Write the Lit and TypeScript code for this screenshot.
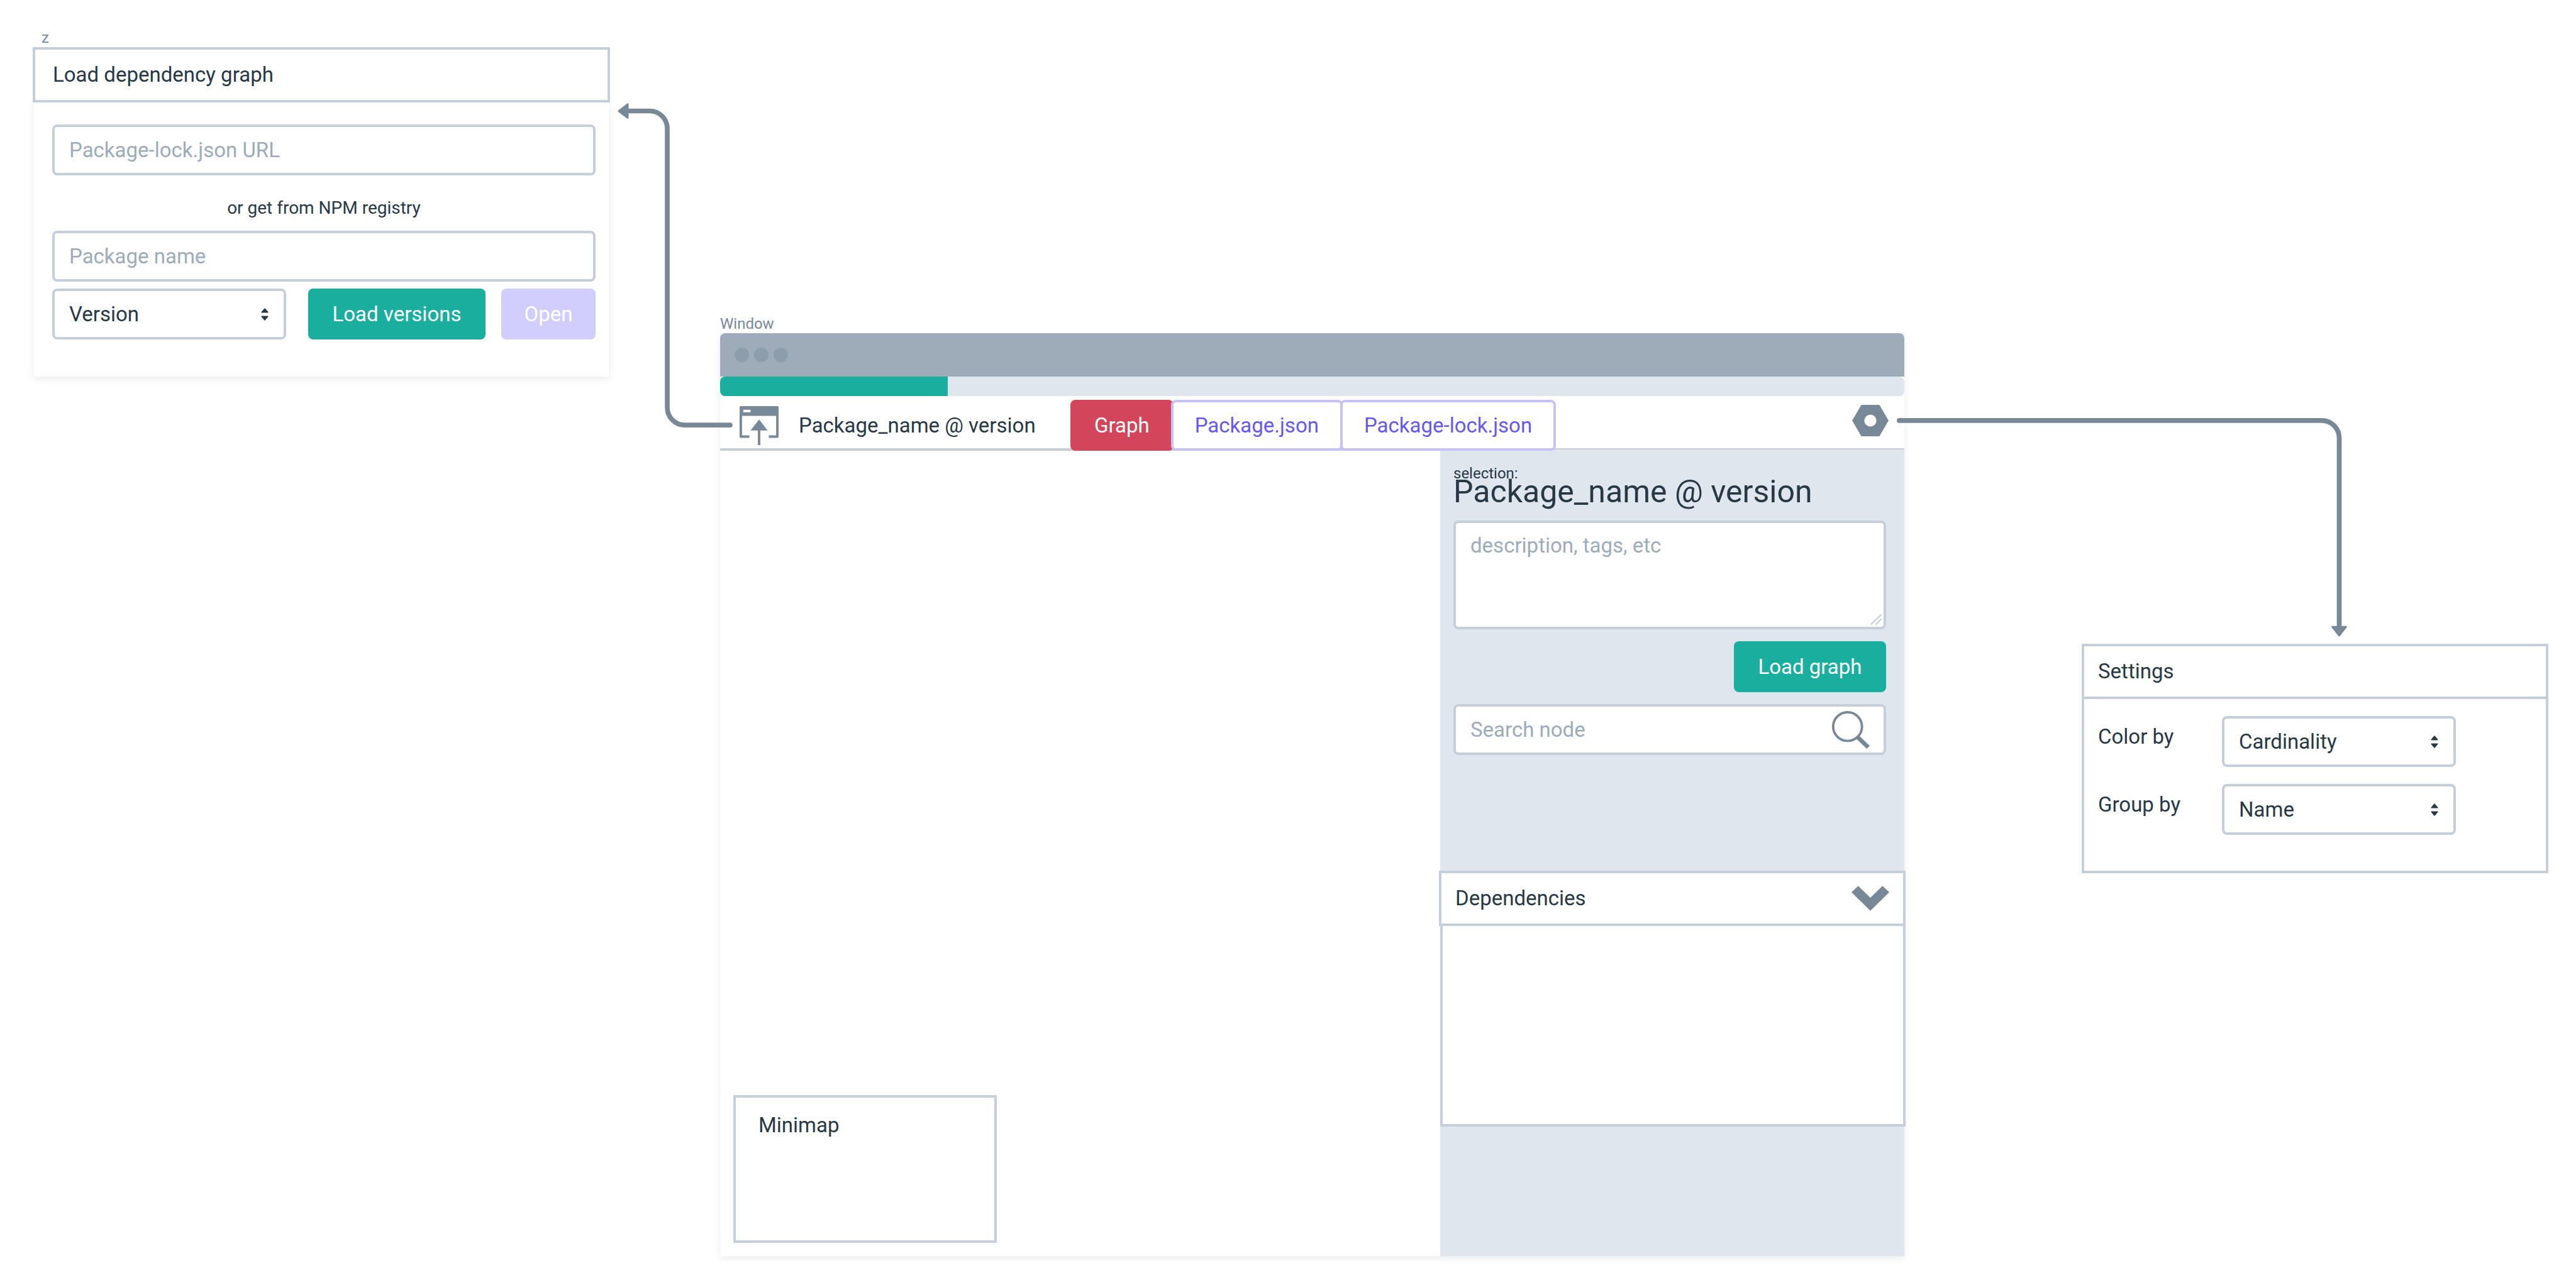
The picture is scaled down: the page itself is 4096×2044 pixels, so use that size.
import { LitElement, html, css } from "lit";
import { customElement, property, state } from "lit/decorators.js";
import { classMap } from "lit/directives/class-map.js";

/* Tokens and controls shared by every panel on the board. */
const shared = css`
  :host {
    --ink: #293845;
    --slate: #788896;
    --steel: #9eacb9;
    --line: #c4cfd9;
    --mist: #dfe6ed;
    --teal: #1aae9f;
    --red: #d3455b;
    --violet: #6558f5;
    --violet-line: #c7c1fb;
    --violet-off: #d1cdfc;
    display: block;
    box-sizing: border-box;
    color: var(--ink);
    font-family: Roboto, "Liberation Sans", sans-serif;
    font-size: 33px;
    line-height: 40px;
  }
  *,
  *::before,
  *::after {
    box-sizing: border-box;
  }
  h2,
  p {
    margin: 0;
    font-weight: 400;
    font-size: 33px;
  }
  .tag {
    color: var(--slate);
    font-size: 24px;
    line-height: 30px;
  }
  .bar {
    display: flex;
    align-items: center;
    justify-content: space-between;
    height: 88px;
    border: 4px solid var(--line);
    background: #fff;
    padding: 0 22px;
  }
  .field {
    display: block;
    width: 100%;
    height: 81px;
    margin: 0;
    padding: 0 23px;
    border: 4px solid var(--line);
    border-radius: 8px;
    outline: none;
    background: #fff;
    color: var(--ink);
    font: inherit;
  }
  .field::placeholder {
    color: var(--steel);
    opacity: 1;
  }
  .btn {
    height: 81px;
    margin: 0;
    padding: 0 32px;
    border: 0;
    border-radius: 8px;
    background: var(--teal);
    color: #fff;
    font: inherit;
    white-space: nowrap;
  }
  .btn:disabled {
    background: var(--violet-off);
  }
  .icon {
    display: block;
    fill: var(--slate);
  }
  .icon-btn {
    display: block;
    margin: 0;
    padding: 0;
    border: 0;
    background: none;
  }
  .cell {
    display: grid;
  }
  .cell > * {
    grid-area: 1 / 1;
  }
  .select {
    appearance: none;
  }
  .arrows {
    place-self: center end;
    margin-right: 28px;
    fill: var(--ink);
    pointer-events: none;
  }
`;

const pickList = (id: string, name: string, options: string[]) => html`<div class="cell">
  <select class="field select" id=${id} aria-label=${name}>
    ${options.map((o) => html`<option>${o}</option>`)}
  </select>
  <svg class="arrows" width="12" height="20" viewBox="0 0 12 20" aria-hidden="true">
    <path d="M5.2 .8a1 1 0 0 1 1.6 0L11.4 6.2Q12 7.5 10.7 7.5H1.3Q0 7.5 .6 6.2Z" />
    <path d="M5.2 19.2a1 1 0 0 0 1.6 0L11.4 13.8Q12 12.5 10.7 12.5H1.3Q0 12.5 .6 13.8Z" />
  </svg>
</div>`;

@customElement("load-panel")
class LoadPanel extends LitElement {
  static styles = [
    shared,
    css`
      .tag {
        padding-left: 14px;
      }
      .bar {
        position: relative;
        padding: 0 28px;
      }
      .body {
        margin: 0 2px;
        padding: 35px 21px 59px 29px;
        background: #fff;
        box-shadow: 0 4px 12px rgba(0, 0, 0, 0.08);
      }
      .or {
        padding: 36px 0 20px;
        font-size: 28px;
        line-height: 32px;
        text-align: center;
      }
      .row {
        display: grid;
        grid-template-columns: 1fr auto auto;
        margin-top: 11px;
      }
      .load {
        min-width: 282px;
        margin: 0 25px 0 35px;
      }
      .open {
        min-width: 150px;
      }
    `,
  ];

  render() {
    return html`
      <div class="tag">z</div>
      <header class="bar"><h2>Load dependency graph</h2></header>
      <div class="body">
        <input class="field" type="text" placeholder="Package-lock.json URL" aria-label="Package-lock.json URL" />
        <p class="or">or get from NPM registry</p>
        <input class="field" type="text" placeholder="Package name" aria-label="Package name" />
        <div class="row">
          ${pickList("version", "Version", ["Version"])}
          <button class="btn load" type="button">Load versions</button>
          <button class="btn open" type="button" disabled>Open</button>
        </div>
      </div>
    `;
  }
}

@customElement("graph-window")
class GraphWindow extends LitElement {
  static styles = [
    shared,
    css`
      :host {
        display: flex;
        flex-direction: column;
      }
      .frame {
        flex: 1;
        display: flex;
        flex-direction: column;
        border-radius: 8px 8px 0 0;
        background: #fff;
        box-shadow: 0 4px 12px rgba(0, 0, 0, 0.08);
      }
      .chrome {
        display: flex;
        align-items: center;
        gap: 8px;
        height: 69px;
        padding-left: 23px;
        border-radius: 8px 8px 0 0;
        background: var(--steel);
      }
      .dot {
        width: 23px;
        height: 23px;
        border-radius: 50%;
        background: #8e9dac;
      }
      .track {
        height: 31px;
        border-radius: 8px;
        background: var(--mist);
      }
      .fill {
        height: 100%;
        border-radius: 8px 0 0 8px;
        background: var(--teal);
      }
      .toolbar {
        display: flex;
        align-items: center;
        height: 87px;
        padding: 6px 25px 0 31px;
        box-shadow: inset 0 -4px var(--line);
      }
      .name {
        flex: 0 0 432px;
        margin-left: 32px;
        white-space: nowrap;
      }
      .tabs {
        position: relative;
        display: flex;
        flex: 1;
      }
      .tab {
        height: 81px;
        margin: 0 -4px 0 0;
        padding: 0 34px;
        border: 4px solid var(--violet-line);
        border-radius: 8px;
        background: #fff;
        color: var(--violet);
        font: inherit;
        white-space: nowrap;
      }
      .tab.on {
        border-color: var(--red);
        background: var(--red);
        color: #fff;
      }
      .gear {
        margin-bottom: 16px;
      }
      .work {
        flex: 1;
        display: flex;
      }
      .canvas {
        flex: 1;
        display: flex;
        align-items: flex-end;
        padding: 21px;
      }
      .minimap {
        width: 419px;
        height: 235px;
        padding: 24px 36px;
        border: 4px solid var(--line);
        background: #fff;
      }
      .side {
        flex: 0 0 738px;
        margin-top: -2px;
        background: var(--mist);
      }
      .info {
        display: flex;
        flex-direction: column;
        gap: 19px;
        padding: 26px 29px 0 21px;
      }
      .caption {
        font-size: 24px;
        line-height: 24px;
      }
      .title {
        margin-top: -10px;
        font-size: 50px;
        line-height: 54px;
      }
      .about {
        height: 173px;
        padding-top: 16px;
        resize: none;
      }
      .grip {
        place-self: end;
        margin: 7px;
        stroke: var(--line);
        stroke-width: 2;
        stroke-linecap: round;
      }
      .load {
        align-self: flex-end;
        min-width: 242px;
      }
      .find {
        place-self: center end;
        margin-right: 25px;
      }
      .deps {
        margin: 184px -2px 0;
      }
      .list {
        height: 319px;
        margin-left: 2px;
        border: 4px solid var(--line);
        border-top: 0;
        background: #fff;
      }
    `,
  ];

  @property({ type: Number }) progress = 19.2;
  @state() private tab = "Graph";

  render() {
    return html`
      <div class="tag">Window</div>
      <div class="frame">
        <div class="chrome"><i class="dot"></i><i class="dot"></i><i class="dot"></i></div>
        <div class="track" role="progressbar" aria-valuenow=${this.progress}>
          <div class="fill" style="width:${this.progress}%"></div>
        </div>
        <div class="toolbar">
          <button class="icon-btn" type="button" aria-label="Load">
            <svg class="icon" width="62" height="62" viewBox="0 0 64 64">
              <path
                fill-rule="evenodd"
                d="M2 0h60a2 2 0 0 1 2 2v48a2 2 0 0 1-2 2H48v-4h12V16H4v32h12v4H2a2 2 0 0 1-2-2V2a2 2 0 0 1 2-2ZM6 6v4h12V6Z"
              />
              <path d="M32 22 46 40H34v24h-4V40H18Z" />
            </svg>
          </button>
          <div class="name">Package_name @ version</div>
          <nav class="tabs">
            ${["Graph", "Package.json", "Package-lock.json"].map(
              (t) => html`<button
                type="button"
                class=${classMap({ tab: true, on: t === this.tab })}
                @click=${() => (this.tab = t)}
              >
                ${t}
              </button>`
            )}
          </nav>
          <button class="icon-btn gear" type="button" aria-label="Settings">
            <svg class="icon" width="58" height="50" viewBox="0 0 60 52">
              <path
                fill-rule="evenodd"
                d="M15 0h30l15 26-15 26H15L0 26ZM30 16a10 10 0 1 0 0 20a10 10 0 1 0 0-20Z"
              />
            </svg>
          </button>
        </div>
        <div class="work">
          <div class="canvas"><div class="minimap">Minimap</div></div>
          <aside class="side">
            <div class="info">
              <div>
                <div class="caption">selection:</div>
                <h2 class="title">Package_name @ version</h2>
              </div>
              <div class="cell">
                <textarea class="field about" placeholder="description, tags, etc" aria-label="Description"></textarea>
                <svg class="grip" width="18" height="17" viewBox="0 0 18 17" aria-hidden="true">
                  <path d="M1 16 17 1M9 16l8-8" />
                </svg>
              </div>
              <button class="btn load" type="button">Load graph</button>
              <div class="cell">
                <input class="field" type="text" placeholder="Search node" aria-label="Search node" />
                <svg class="icon find" width="63" height="63" viewBox="0 0 66 66" aria-hidden="true">
                  <circle cx="28" cy="28" r="24" fill="none" stroke="#788896" stroke-width="4" />
                  <path d="m42 48 5-5 18 17-5 5Z" />
                </svg>
              </div>
            </div>
            <section class="deps">
              <header class="bar">
                <h2>Dependencies</h2>
                <button class="icon-btn" type="button" aria-label="Toggle dependencies">
                  <svg class="icon" width="60" height="40" viewBox="0 0 62 41">
                    <path d="M0 10.5 11 0l20 19.5L51 0l11 10.5L31 41Z" />
                  </svg>
                </button>
              </header>
              <div class="list"></div>
            </section>
          </aside>
        </div>
      </div>
    `;
  }
}

@customElement("settings-panel")
class SettingsPanel extends LitElement {
  static styles = [
    shared,
    css`
      .body {
        display: grid;
        grid-template-columns: 197px 372px;
        align-items: center;
        row-gap: 27px;
        padding: 27px 22px 57px;
        border: 4px solid var(--line);
        border-top: 0;
        background: #fff;
      }
      .label {
        padding-bottom: 16px;
      }
    `,
  ];

  render() {
    const rows = [
      { id: "color", label: "Color by", value: "Cardinality" },
      { id: "group", label: "Group by", value: "Name" },
    ];
    return html`
      <header class="bar"><h2>Settings</h2></header>
      <div class="body">
        ${rows.map(
          (r) => html`<label class="label" for=${r.id}>${r.label}</label>
            ${pickList(r.id, r.label, [r.value])}`
        )}
      </div>
    `;
  }
}

/* Three panels on one board, joined by two elbow connectors. */
@customElement("app-root")
class AppRoot extends LitElement {
  static styles = css`
    :host {
      display: block;
    }
    .board {
      display: grid;
      grid-template-columns: 918fr 175px 1883fr 282px 742fr;
      min-height: 100vh;
      box-sizing: border-box;
      padding: 45px 44px 46px 52px;
      background: #fff;
    }
    .board > * {
      grid-row: 1;
      align-self: start;
      min-width: 0;
    }
    .load {
      grid-column: 1;
    }
    .window {
      grid-column: 3;
      align-self: stretch;
      margin-top: 455px;
    }
    .settings {
      grid-column: 5;
      margin-top: 979px;
    }
    .link {
      display: block;
      fill: #788896;
    }
    .wire {
      fill: none;
      stroke: #788896;
      stroke-width: 8;
      stroke-linecap: round;
    }
    .to-load {
      grid-column: 2 / 4;
      margin: 119px 0 0 12px;
    }
    .to-settings {
      grid-column: 4 / 6;
      margin: 620px 0 0 -12px;
    }
  `;

  render() {
    return html`
      <main class="board">
        <load-panel class="load"></load-panel>
        <graph-window class="window"></graph-window>
        <settings-panel class="settings"></settings-panel>
        <svg class="link to-load" width="183" height="516" viewBox="0 0 190 537" aria-hidden="true">
          <path class="wire" d="M14 13H53a29 29 0 0 1 29 29V504a29 29 0 0 0 29 29H186" />
          <path d="M1 12 15.5 .8Q18 -.8 18 2V24Q18 27 15.500 25.500L1 14.500Q-.6 13 1 12Z" />
        </svg>
        <svg class="link to-settings" width="716" height="348" viewBox="0 0 745 362" aria-hidden="true">
          <path class="wire" d="M4 4H703a29 29 0 0 1 29 29V350" />
          <path d="M731 361 719.5 346.500Q718 344 721 344H743Q746 344 744.400 346.500L733 361Q732 362.500 731 361Z" />
        </svg>
      </main>
    `;
  }
}
